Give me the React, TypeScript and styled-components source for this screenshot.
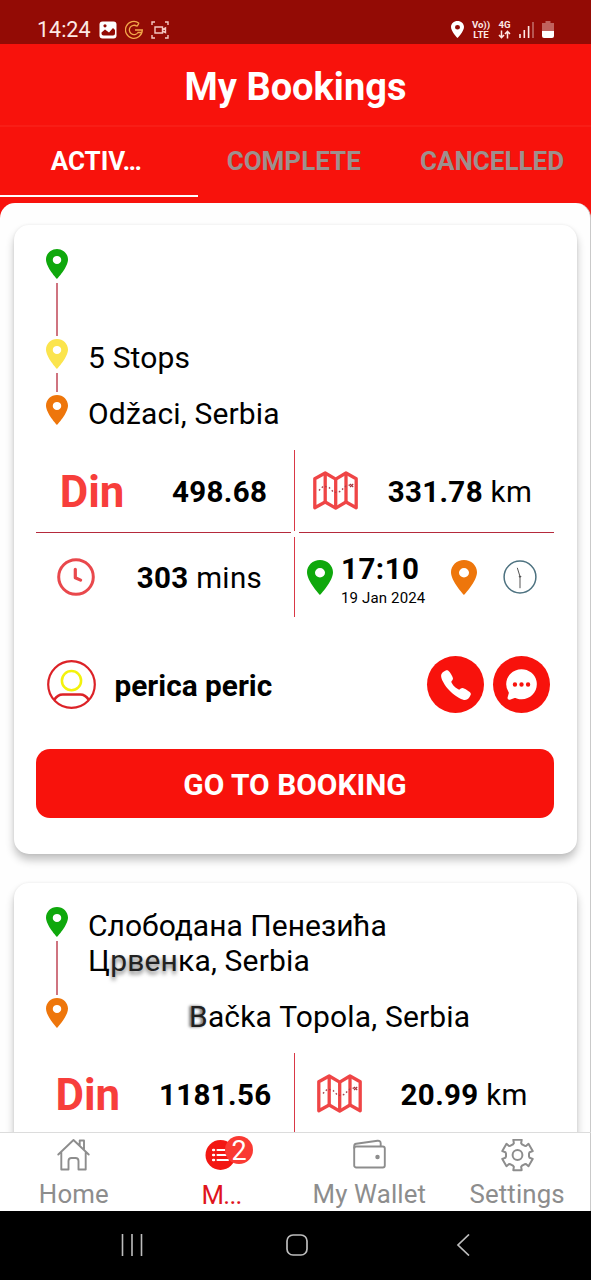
import React from "react";
import styled, { createGlobalStyle } from "styled-components";
import { IoCall, IoChatbubbleEllipses } from "react-icons/io5";

const RED = "#f8120c";
const GREY = "#8d8d8d";

const GlobalStyle = createGlobalStyle`
  * { box-sizing: border-box; }
  html, body { margin: 0; padding: 0; background: #fff; }
  body { font-family: Roboto, "Noto Sans", sans-serif; color: #000; }
  svg { display: block; flex: none; }
`;

const Screen = styled.div`
  width: 591px;
  height: 1280px;
  display: flex;
  flex-direction: column;
  overflow: hidden;
  background: ${RED};
`;

const StatusBar = styled.div`
  height: 44px;
  padding: 17px 37px 0 37px;
  display: flex;
  align-items: flex-start;
  justify-content: space-between;
  background: #930b05;
  color: #fde9e6;
`;

const StatusGroup = styled.div<{ $gap: number }>`
  display: flex;
  align-items: center;
  gap: ${(p) => p.$gap}px;
  height: 25px;
`;

const Clock = styled.span`
  font-size: 21.5px;
  line-height: 25px;
`;

const TinyStack = styled.div<{ $width: number }>`
  display: flex;
  flex-direction: column;
  align-items: center;
  width: ${(p) => p.$width}px;
  font-size: 9.6px;
  line-height: 10px;
  font-weight: 700;
`;

const TitleBar = styled.header`
  height: 83px;
  display: flex;
  align-items: center;
  justify-content: center;
  border-bottom: 2px solid #f91d16;
`;

const Title = styled.h1`
  margin: 5px 0 0;
  font-size: 38px;
  line-height: 46px;
  font-weight: 700;
  color: #fff;
`;

const Tabs = styled.nav`
  height: 69px;
  flex: none;
  display: grid;
  grid-template-columns: 197.5px 1fr 197px;
`;

const Tab = styled.div<{ $active?: boolean; $shift?: number }>`
  padding: 1px ${(p) => p.$shift || 0}px 0 0;
  text-align: center;
  font-size: 26px;
  line-height: 67px;
  font-weight: 700;
  color: ${(p) => (p.$active ? "#fff" : "#9d908e")};
  border-bottom: 2px solid ${(p) => (p.$active ? "#fff" : "transparent")};
`;

const Sheet = styled.main`
  flex: 1;
  min-height: 0;
  margin-top: 7px;
  padding: 22px 13px 0 14px;
  display: flex;
  flex-direction: column;
  gap: 29px;
  overflow: hidden;
  background: #fefefe;
  border-right: 1px solid #c9c9c9;
  border-radius: 15px 15px 0 0;
`;

const Card = styled.article`
  flex: none;
  padding: 24px 23px 36px 22px;
  background: #fff;
  border-radius: 15px;
  box-shadow: 0 6px 9px rgba(0, 0, 0, 0.24), 0 0 3px rgba(0, 0, 0, 0.07);
`;

const RouteRow = styled.div<{ $height: number }>`
  display: flex;
  gap: 20px;
  height: ${(p) => p.$height}px;
  padding-left: 10px;
`;

const Marker = styled.div`
  width: 22px;
  display: flex;
  flex-direction: column;
  align-items: center;
  gap: 4px;
`;

const Connector = styled.i`
  flex: 1;
  width: 2px;
  margin-bottom: 3px;
  background: #cf7480;
`;

const Address = styled.div<{ $indent?: number }>`
  margin: 1px 0 0 ${(p) => p.$indent || 0}px;
  font-size: 30px;
  line-height: 35px;
  letter-spacing: 0.17px;
  white-space: nowrap;
`;

const Street = styled.span`
  letter-spacing: 0.02px;
`;

const Smudge = styled.span`
  color: #222;
  text-shadow: 0 3px 4px rgba(0, 0, 0, 0.55);
`;

const SmudgeLeft = styled.span`
  color: #222;
  text-shadow: -2px 0 3px rgba(0, 0, 0, 0.6);
`;

const Stats = styled.section`
  margin-top: 25px;
`;

const StatRow = styled.div<{ $height: number }>`
  display: grid;
  grid-template-columns: 258px 1px minmax(0, 1fr);
  height: ${(p) => p.$height}px;
`;

const Divider = styled.i`
  background: #d93846;
`;

const Rules = styled.div`
  display: flex;
  gap: 8px;
  height: 6px;
  padding-top: 1px;
  i {
    flex: 1;
    height: 1px;
    background: #b52a3c;
  }
`;

const Cell = styled.div<{ $pad?: string }>`
  display: flex;
  align-items: center;
  justify-content: space-around;
  padding: ${(p) => p.$pad || "0"};
`;

const Currency = styled.span`
  font-size: 43.8px;
  line-height: 50px;
  font-weight: 700;
  color: #f73e3b;
  padding-top: 3px;
`;

const Value = styled.span`
  font-size: 29.5px;
  line-height: 36px;
  letter-spacing: 0.35px;
  padding-top: 2px;
  white-space: nowrap;
  b { font-weight: 700; }
`;

const Schedule = styled.div`
  display: flex;
  align-items: center;
  padding-left: 12px;
`;

const When = styled.div`
  width: 109px;
  margin-left: 8px;
  margin-right: 1px;
  padding-top: 5px;
`;

const Time = styled.div`
  font-size: 29.5px;
  line-height: 34px;
  font-weight: 700;
  letter-spacing: 0.5px;
`;

const DateText = styled.div`
  font-size: 15px;
  line-height: 18px;
  letter-spacing: 0.15px;
  margin-top: 3px;
`;

const ClockSlot = styled.div`
  margin-left: 26px;
`;

const Driver = styled.section`
  height: 57px;
  margin-top: 39px;
  padding: 0 4px 0 11px;
  display: flex;
  align-items: center;
  gap: 9px;
`;

const Name = styled.strong`
  flex: 1;
  padding: 3px 0 0 9.5px;
  font-size: 29.8px;
  line-height: 36px;
  font-weight: 700;
`;

const RoundButton = styled.button`
  width: 57px;
  height: 57px;
  padding: 0;
  border: 0;
  border-radius: 50%;
  display: flex;
  align-items: center;
  justify-content: center;
  background: ${RED};
  color: #fff;
`;

const PrimaryButton = styled.button`
  display: block;
  width: 100%;
  height: 69px;
  margin-top: 36px;
  padding: 3px 0 0;
  border: 0;
  border-radius: 14px;
  background: ${RED};
  color: #fff;
  font: 700 29.9px/36px Roboto, sans-serif;
`;

const BottomNav = styled.nav`
  height: 79px;
  flex: none;
  display: grid;
  grid-template-columns: repeat(4, minmax(0, 1fr));
  background: #fff;
  border-top: 1px solid #dcdcdc;
  box-shadow: inset -1px 0 #c9c9c9;
`;

const NavItem = styled.div<{ $active?: boolean }>`
  display: flex;
  flex-direction: column;
  align-items: center;
  padding-top: 6px;
  font-size: 25.8px;
  line-height: 30px;
  letter-spacing: 0.15px;
  white-space: nowrap;
  color: ${(p) => (p.$active ? "#e0141c" : GREY)};
  svg { margin-bottom: 7px; }
`;

const IconHolder = styled.div`
  position: relative;
`;

const ActiveLabel = styled.span`
  margin-top: 1px;
  letter-spacing: -0.7px;
`;

const Badge = styled.span`
  position: absolute;
  left: 20px;
  top: -3px;
  width: 28px;
  height: 28px;
  border-radius: 50%;
  background: #fa3a33;
  color: #fff;
  font-size: 27px;
  line-height: 31px;
  text-align: center;
`;

const SystemBar = styled.div`
  height: 69px;
  flex: none;
  display: flex;
  align-items: center;
  gap: 143px;
  padding: 0 0 1px 121px;
  background: #000;
`;

const Pin = ({ color, w = 22, h = 30 }: { color: string; w?: number; h?: number }) => (
  <svg width={w} height={h} viewBox="5 2 14 20" preserveAspectRatio="none" fill={color}>
    <path d="M12 2C8.13 2 5 5.13 5 9c0 5.25 7 13 7 13s7-7.75 7-13c0-3.87-3.13-7-7-7zm0 10a2.7 2.7 0 1 1 0-5.4 2.7 2.7 0 0 1 0 5.4z" />
  </svg>
);

const MapIcon = () => (
  <svg width="45" height="39" viewBox="0 0 45 39" fill="none" stroke="#ef4546" strokeWidth="3.3" strokeLinejoin="round">
    <path d="M1.8 7.8 12.2 2l10.5 6.2L33 2l10.2 5.8v29L33 31l-10.3 6.2L12.2 31 1.8 36.8Z" />
    <path d="M12.2 2v29M22.7 8v29M33 2v29" />
    <path d="M6 19.5l4.5-4.5 5.5 1.5 5 5 6-1 6-5.5 4-1" stroke="#a8404a" strokeWidth="1.4" strokeDasharray="1.6 2.4" />
    <path d="M37 13l3.2 3M40.2 13 37 16" stroke="#a3303a" strokeWidth="1.1" />
  </svg>
);

const DurationIcon = () => (
  <svg width="38" height="38" viewBox="0 0 38 38" fill="none" stroke="#e9484c" strokeWidth="3" strokeLinecap="round" strokeLinejoin="round">
    <circle cx="19" cy="19" r="17.3" />
    <path d="M18.3 11.3v8.4l5.3 2.4" strokeWidth="3.2" />
  </svg>
);

const ArrivalClock = () => (
  <svg width="34" height="34" viewBox="0 0 34 34" fill="none" stroke="#4d7280" strokeLinecap="round">
    <circle cx="17" cy="17" r="15.9" strokeWidth="1.5" />
    <path d="M17 16.5 14.4 8.2M17 16.5v11.3" stroke="#555" strokeWidth="1" />
    <circle cx="17" cy="16.6" r="0.7" fill="#555" stroke="#555" />
  </svg>
);

const Avatar = () => (
  <svg width="49" height="49" viewBox="0 0 49 49" fill="none" stroke="#dc2227" strokeWidth="2.2">
    <circle cx="24.5" cy="24.5" r="23.3" />
    <path d="M7.3 39.8c2-3.2 4.7-5.3 8.5-5.3h17.4c3.8 0 6.5 2.1 8.5 5.3" strokeWidth="2.6" />
    <circle cx="24.5" cy="20.7" r="9.6" stroke="#f3f20c" strokeWidth="2.5" />
  </svg>
);

const HomeIcon = () => (
  <svg width="33" height="33" viewBox="0 0 33 33" fill="none" stroke={GREY} strokeWidth="1.9" strokeLinejoin="round" strokeLinecap="round">
    <path d="M1.3 15.5 16.5 1 31.7 15.5M4.3 13V30.5h7.2V22q0-3 3-3h4q3 0 3 3V30.5h7.2V13M22.7 6.5V1.5h4.3v9" />
  </svg>
);

const ListIcon = () => (
  <svg width="33" height="33" viewBox="0 0 33 33">
    <circle cx="15.5" cy="16" r="15" fill="#f31712" />
    <g stroke="#fff" strokeWidth="2.1" strokeLinecap="round">
      <path d="M12.5 11H23M12.5 16H23M12.5 21H23" />
      <path d="M8.3 11h.6M8.3 16h.6M8.3 21h.6" strokeWidth="2.7" />
    </g>
  </svg>
);

const WalletIcon = () => (
  <svg width="33" height="33" viewBox="0 0 33 33" fill="none" stroke={GREY} strokeWidth="1.9" strokeLinejoin="round">
    <rect x="1.2" y="7.5" width="30.6" height="21" rx="2" />
    <path d="M1.2 9.5V7q0-2 2-2.3L24.5 1.8q3-.3 3.2 2.5V7.5" />
    <circle cx="24.5" cy="18" r="1.5" fill={GREY} strokeWidth="1.5" />
  </svg>
);

const GEAR_PATH = (() => {
  const points: string[] = [];
  for (let tooth = 0; tooth < 6; tooth++) {
    const base = tooth * 60 - 90;
    [[-23, 11.6], [-17, 12.4], [-15.5, 15.7], [15.5, 15.7], [17, 12.4], [23, 11.6]].forEach(([deg, r]) => {
      const a = ((base + deg) * Math.PI) / 180;
      points.push(`${(16.5 + r * Math.cos(a)).toFixed(2)} ${(16 + r * Math.sin(a)).toFixed(2)}`);
    });
  }
  return `M${points.join("L")}Z`;
})();

const GearIcon = () => (
  <svg width="33" height="33" viewBox="0 0 33 33" fill="none" stroke={GREY} strokeWidth="2" strokeLinejoin="round">
    <path d={GEAR_PATH} />
    <circle cx="16.5" cy="16" r="4.9" />
  </svg>
);

interface Stop {
  color: string;
  height: number;
  indent?: number;
  label?: React.ReactNode;
}

const Route = ({ stops }: { stops: Stop[] }) => (
  <section>
    {stops.map((stop, i) => (
      <RouteRow key={i} $height={stop.height}>
        <Marker>
          <Pin color={stop.color} />
          {i < stops.length - 1 && <Connector />}
        </Marker>
        <Address $indent={stop.indent}>{stop.label}</Address>
      </RouteRow>
    ))}
  </section>
);

const PriceDistance = ({ price, km }: { price: string; km: string }) => (
  <StatRow $height={81}>
    <Cell $pad="0 3px 0 0">
      <Currency>Din</Currency>
      <Value><b>{price}</b></Value>
    </Cell>
    <Divider />
    <Cell $pad="0 7px 0 3px">
      <MapIcon />
      <Value><b>{km}</b> km</Value>
    </Cell>
  </StatRow>
);

const GREEN = "#0fa80c";
const YELLOW = "#fbe44d";
const ORANGE = "#ee760b";

export default function App() {
  return (
    <Screen>
      <GlobalStyle />
      <StatusBar>
        <StatusGroup $gap={8}>
          <Clock>14:24</Clock>
          <svg width="18" height="18" viewBox="0 0 18 18">
            <rect x="0.5" y="0.5" width="17" height="17" rx="3" fill="#fff" />
            <path d="M2.5 11.5 6 8.5l4 3 4-4.5 2 2v3.5q0 2-2 2H4.5q-2 0-2-2Z" fill="#930b05" />
            <circle cx="6" cy="4.8" r="1.6" fill="#930b05" />
          </svg>
          <svg width="18" height="20" viewBox="1 0 18 20" fill="none" stroke="#f3a84a" strokeWidth="1.3">
            <path d="M15 3.2A8.4 8.4 0 1 0 18.3 10H11" />
            <path d="M13 6.3A4.7 4.7 0 1 0 14 12.5h3.7M15 3.2l-2 3.1" />
          </svg>
          <svg width="18" height="18" viewBox="0 0 18 18" fill="none" stroke="#f5c9c3" strokeWidth="1.4">
            <path d="M1 4V1h3M14 1h3v3M17 14v3h-3M4 17H1v-3" />
            <path d="M4 6h7.5v6H4ZM11.5 8.5 14.5 7v4.5l-3-1.5" />
          </svg>
        </StatusGroup>
        <StatusGroup $gap={8}>
          <Pin color="#fff" w={13} h={17} />
          <TinyStack $width={18}><span>Vo))</span><span>LTE</span></TinyStack>
          <TinyStack $width={13}>
            <span>4G</span>
            <svg width="13" height="9" viewBox="0 0 13 9" fill="none" stroke="#fde9e6" strokeWidth="1.5">
              <path d="M3.5 0.5v7M1 5l2.5 2.7L6 5M9.5 8.5v-7M7 4l2.5-2.7L12 4" />
            </svg>
          </TinyStack>
          <svg width="15" height="17" viewBox="0 0 15 17" strokeWidth="1.6">
            <path d="M1 13v4M5.3 9v8M9.6 5v12" stroke="#fde9e6" />
            <path d="M14 1v16" stroke="#c06b66" />
          </svg>
          <svg width="12" height="17" viewBox="0 0 12 17">
            <path d="M3.5 0h5v2H12v8H0V2h3.5Z" fill="#c0625d" />
            <path d="M0 10h12v5q0 2-2 2H2q-2 0-2-2Z" fill="#fff" />
          </svg>
        </StatusGroup>
      </StatusBar>
      <TitleBar><Title>My Bookings</Title></TitleBar>
      <Tabs>
        <Tab $active $shift={5}>ACTIV…</Tab>
        <Tab $shift={4}>COMPLETE</Tab>
        <Tab $shift={1}>CANCELLED</Tab>
      </Tabs>
      <Sheet>
        <Card>
          <Route
            stops={[
              { color: GREEN, height: 90 },
              { color: YELLOW, height: 56, label: "5 Stops" },
              { color: ORANGE, height: 30, label: "Odžaci, Serbia" },
            ]}
          />
          <Stats>
            <PriceDistance price="498.68" km="331.78" />
            <Rules><i /><i /></Rules>
            <StatRow $height={80}>
              <Cell $pad="0 11px 0 0">
                <DurationIcon />
                <Value><b>303</b> mins</Value>
              </Cell>
              <Divider />
              <Schedule>
                <Pin color={GREEN} w={26} h={35} />
                <When>
                  <Time>17:10</Time>
                  <DateText>19 Jan 2024</DateText>
                </When>
                <Pin color={ORANGE} w={26} h={35} />
                <ClockSlot><ArrivalClock /></ClockSlot>
              </Schedule>
            </StatRow>
          </Stats>
          <Driver>
            <Avatar />
            <Name>perica peric</Name>
            <RoundButton aria-label="Call"><IoCall size={34} /></RoundButton>
            <RoundButton aria-label="Message"><IoChatbubbleEllipses size={35} /></RoundButton>
          </Driver>
          <PrimaryButton>GO TO BOOKING</PrimaryButton>
        </Card>
        <Card>
          <Route
            stops={[
              {
                color: GREEN,
                height: 91,
                label: <><Street>Слободана Пенезића</Street><br />Ц<Smudge>рвен</Smudge>ка, Serbia</>,
              },
              {
                color: ORANGE,
                height: 30,
                indent: 101,
                label: <><SmudgeLeft>B</SmudgeLeft>ačka Topola, Serbia</>,
              },
            ]}
          />
          <Stats>
            <PriceDistance price="1181.56" km="20.99" />
          </Stats>
        </Card>
      </Sheet>
      <BottomNav>
        <NavItem><HomeIcon />Home</NavItem>
        <NavItem $active>
          <IconHolder><ListIcon /><Badge>2</Badge></IconHolder>
          <ActiveLabel>M...</ActiveLabel>
        </NavItem>
        <NavItem><WalletIcon />My Wallet</NavItem>
        <NavItem><GearIcon />Settings</NavItem>
      </BottomNav>
      <SystemBar>
        <svg width="22" height="22" viewBox="0 0 22 22" stroke="#bdbdbd" strokeWidth="1.6">
          <path d="M1.5 0v22M11 0v22M20.5 0v22" />
        </svg>
        <svg width="22" height="22" viewBox="0 0 22 22" fill="none" stroke="#bdbdbd" strokeWidth="1.7">
          <rect x="1" y="1" width="20" height="20" rx="6" />
        </svg>
        <svg width="22" height="22" viewBox="-5 0 22 22" fill="none" stroke="#bdbdbd" strokeWidth="1.7">
          <path d="M13 0.5 2 11l11 10.5" />
        </svg>
      </SystemBar>
    </Screen>
  );
}
